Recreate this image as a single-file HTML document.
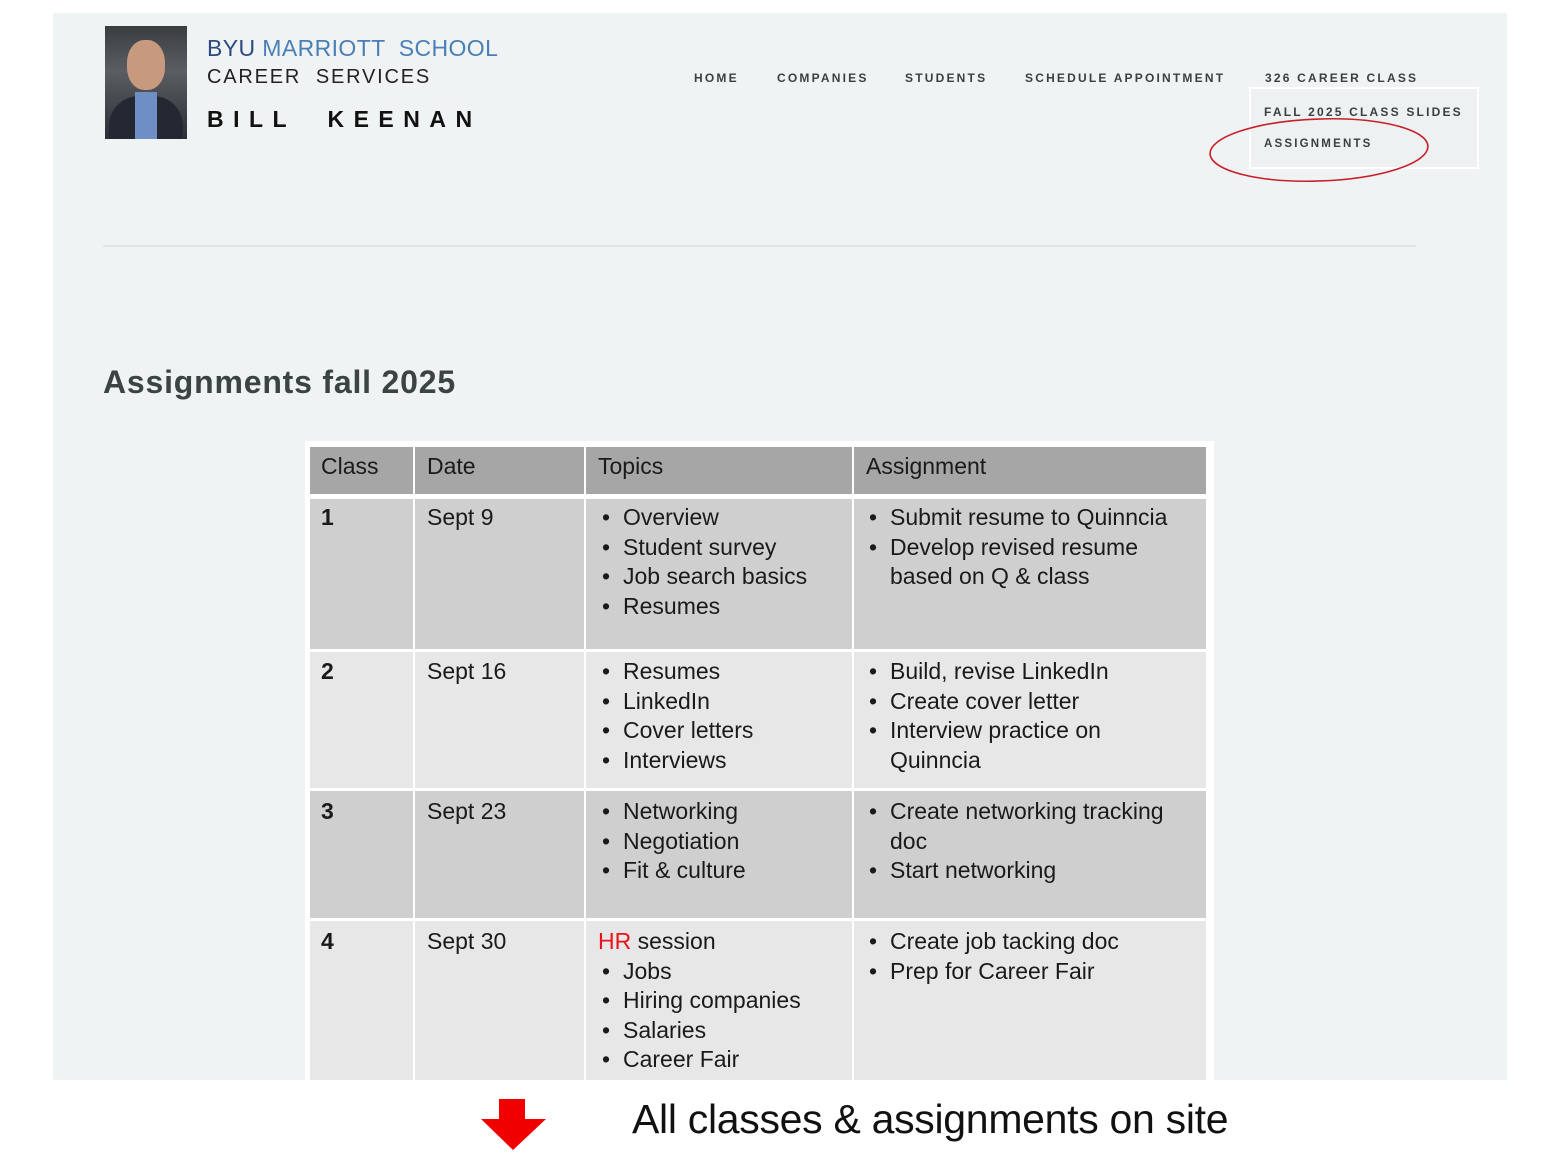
<!DOCTYPE html>
<html><head><meta charset="utf-8"><style>
*{margin:0;padding:0;box-sizing:border-box}
body{width:1560px;height:1170px;background:#fff;position:relative;overflow:hidden;font-family:"Liberation Sans",sans-serif}
.shot{position:absolute;left:53px;top:13px;width:1454px;height:1067px;background:#f0f3f4}
.a{position:absolute}
.nav{position:absolute;top:71px;font-size:12px;letter-spacing:2.2px;color:#3a3f42;font-weight:bold;white-space:nowrap}
.cell{position:absolute}
.t{position:absolute;font-size:23px;line-height:29.5px;color:#1a1a1a;white-space:nowrap}
.t div{position:relative;padding-left:25px}
.t div.b::before{content:"•";position:absolute;left:4px;top:0}
</style></head><body>
<div class="shot"></div>
<div class="a" style="left:105px;top:26px;width:82px;height:113px;background:linear-gradient(#3a3d40,#5a5e62 40%,#2b2f36);overflow:hidden">
 <div class="a" style="left:22px;top:14px;width:38px;height:50px;border-radius:45%;background:#c79a80"></div>
 <div class="a" style="left:4px;top:70px;width:74px;height:50px;border-radius:30px 30px 0 0;background:#232833"></div>
 <div class="a" style="left:30px;top:66px;width:22px;height:47px;background:#6f8fc4"></div>
</div>
<div class="a" style="left:207px;top:35px;font-size:23px;letter-spacing:0.4px;color:#2c4a80;white-space:nowrap">BYU <span style="color:#4a7fb5">MARRIOTT &nbsp;SCHOOL</span></div>
<div class="a" style="left:207px;top:66px;font-size:20px;letter-spacing:1.8px;color:#222;white-space:nowrap">CAREER &nbsp;SERVICES</div>
<div class="a" style="left:207px;top:106px;font-size:23px;font-weight:bold;letter-spacing:9.5px;color:#111;white-space:nowrap">BILL &nbsp;KEENAN</div>

<div class="nav" style="left:694px">HOME</div>
<div class="nav" style="left:777px">COMPANIES</div>
<div class="nav" style="left:905px">STUDENTS</div>
<div class="nav" style="left:1025px">SCHEDULE APPOINTMENT</div>
<div class="nav" style="left:1265px">326 CAREER CLASS</div>
<div class="a" style="left:1249px;top:87px;width:230px;height:82px;border:2px solid #fff;background:#eef1f2"></div>
<div class="nav" style="left:1264px;top:105px">FALL 2025 CLASS SLIDES</div>
<div class="nav" style="left:1264px;top:138px;font-size:11.5px">ASSIGNMENTS</div>
<svg class="a" style="left:1205px;top:112px" width="230" height="76"><ellipse cx="114" cy="38" rx="109" ry="31" fill="none" stroke="#c8202a" stroke-width="1.6" transform="rotate(-2 114 38)"/></svg>

<div class="a" style="left:103px;top:245px;width:1313px;height:2px;background:#e2e6e8"></div>
<div class="a" style="left:103px;top:364px;font-size:32px;font-weight:bold;color:#3b4345;letter-spacing:0.8px;white-space:nowrap">Assignments fall 2025</div>

<div class="a" style="left:305px;top:441px;width:909px;height:639px;background:#fff"></div>
<div class="cell" style="left:310px;top:447px;width:103px;height:47px;background:#a6a6a6"></div>
<div class="cell" style="left:415px;top:447px;width:169px;height:47px;background:#a6a6a6"></div>
<div class="cell" style="left:586px;top:447px;width:266px;height:47px;background:#a6a6a6"></div>
<div class="cell" style="left:854px;top:447px;width:352px;height:47px;background:#a6a6a6"></div>

<div class="cell" style="left:310px;top:499px;width:103px;height:150px;background:#cfcfcf"></div>
<div class="cell" style="left:415px;top:499px;width:169px;height:150px;background:#cfcfcf"></div>
<div class="cell" style="left:586px;top:499px;width:266px;height:150px;background:#cfcfcf"></div>
<div class="cell" style="left:854px;top:499px;width:352px;height:150px;background:#cfcfcf"></div>

<div class="cell" style="left:310px;top:652px;width:103px;height:136px;background:#e7e7e7"></div>
<div class="cell" style="left:415px;top:652px;width:169px;height:136px;background:#e7e7e7"></div>
<div class="cell" style="left:586px;top:652px;width:266px;height:136px;background:#e7e7e7"></div>
<div class="cell" style="left:854px;top:652px;width:352px;height:136px;background:#e7e7e7"></div>

<div class="cell" style="left:310px;top:791px;width:103px;height:127px;background:#cfcfcf"></div>
<div class="cell" style="left:415px;top:791px;width:169px;height:127px;background:#cfcfcf"></div>
<div class="cell" style="left:586px;top:791px;width:266px;height:127px;background:#cfcfcf"></div>
<div class="cell" style="left:854px;top:791px;width:352px;height:127px;background:#cfcfcf"></div>

<div class="cell" style="left:310px;top:921px;width:103px;height:159px;background:#e7e7e7"></div>
<div class="cell" style="left:415px;top:921px;width:169px;height:159px;background:#e7e7e7"></div>
<div class="cell" style="left:586px;top:921px;width:266px;height:159px;background:#e7e7e7"></div>
<div class="cell" style="left:854px;top:921px;width:352px;height:159px;background:#e7e7e7"></div>

<div class="t" style="left:321px;top:452px">Class</div>
<div class="t" style="left:427px;top:452px">Date</div>
<div class="t" style="left:598px;top:452px">Topics</div>
<div class="t" style="left:866px;top:452px">Assignment</div>

<div class="t" style="left:321px;top:503px;font-weight:bold">1</div>
<div class="t" style="left:427px;top:503px">Sept 9</div>
<div class="t" style="left:598px;top:503px"><div class="b">Overview</div><div class="b">Student survey</div><div class="b">Job search basics</div><div class="b">Resumes</div></div>
<div class="t" style="left:865px;top:503px"><div class="b">Submit resume to Quinncia</div><div class="b">Develop revised resume</div><div>based on Q &amp; class</div></div>

<div class="t" style="left:321px;top:657px;font-weight:bold">2</div>
<div class="t" style="left:427px;top:657px">Sept 16</div>
<div class="t" style="left:598px;top:657px"><div class="b">Resumes</div><div class="b">LinkedIn</div><div class="b">Cover letters</div><div class="b">Interviews</div></div>
<div class="t" style="left:865px;top:657px"><div class="b">Build, revise LinkedIn</div><div class="b">Create cover letter</div><div class="b">Interview practice on</div><div>Quinncia</div></div>

<div class="t" style="left:321px;top:797px;font-weight:bold">3</div>
<div class="t" style="left:427px;top:797px">Sept 23</div>
<div class="t" style="left:598px;top:797px"><div class="b">Networking</div><div class="b">Negotiation</div><div class="b">Fit &amp; culture</div></div>
<div class="t" style="left:865px;top:797px"><div class="b">Create networking tracking</div><div>doc</div><div class="b">Start networking</div></div>

<div class="t" style="left:321px;top:927px;font-weight:bold">4</div>
<div class="t" style="left:427px;top:927px">Sept 30</div>
<div class="t" style="left:598px;top:927px"><span style="color:#e8141b">HR</span> session<div class="b">Jobs</div><div class="b">Hiring companies</div><div class="b">Salaries</div><div class="b">Career Fair</div></div>
<div class="t" style="left:865px;top:927px"><div class="b">Create job tacking doc</div><div class="b">Prep for Career Fair</div></div>

<div class="a" style="left:305px;top:1080px;width:909px;height:2px;background:#fff"></div>
<svg class="a" style="left:480px;top:1097px" width="68" height="56"><polygon points="19,2 45,2 45,22 66,22 33,53 1,22 19,22" fill="#f00000"/></svg>
<div class="a" style="left:632px;top:1096px;font-size:41px;color:#111;white-space:nowrap;letter-spacing:-0.3px">All classes &amp; assignments on site</div>
</body></html>
